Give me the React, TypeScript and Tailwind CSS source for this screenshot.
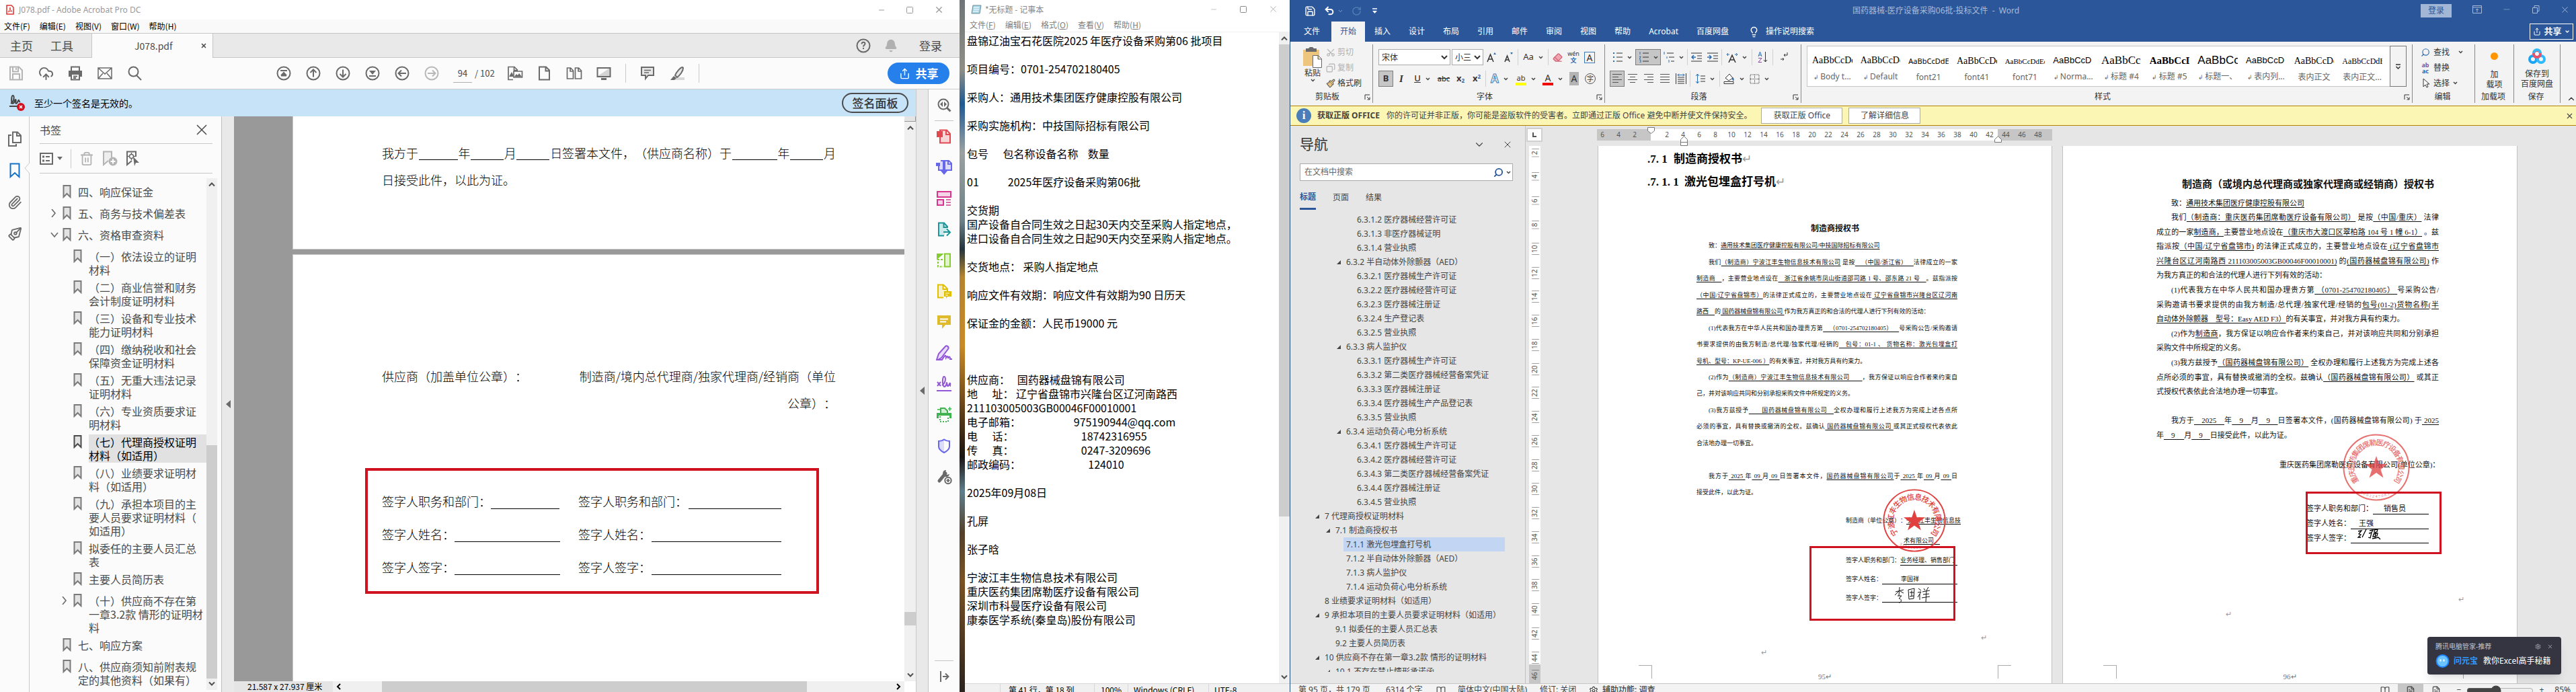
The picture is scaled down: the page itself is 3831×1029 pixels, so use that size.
import type { ReactNode } from "react";
import {
  Bell,
  BookOpen,
  ChevronDown,
  ChevronUp,
  CloudUpload,
  Copy,
  Eraser,
  FileText,
  Lightbulb,
  Minus,
  Paintbrush,
  Paperclip,
  PenTool,
  RotateCw,
  Save,
  Scissors,
  Search,
  Settings,
  Share,
  Square,
  Trash2,
  Undo2,
  X,
} from "lucide-react";

const uiFont = "font-['Noto_Sans','Noto_Sans_CJK_SC',sans-serif]";
const cjkFont = "font-['Noto_Sans_CJK_SC',sans-serif]";
const docFont = "font-['Liberation_Serif','Noto_Sans_CJK_SC',serif]";

interface DrawProps {
  w?: number;
  h?: number;
  className?: string;
  children: ReactNode;
}

function Draw({ w = 22, h = 22, className = "", children }: DrawProps) {
  return (
    <svg
      width={w}
      height={h}
      viewBox={`0 0 ${w} ${h}`}
      fill="none"
      stroke="currentColor"
      strokeWidth="2"
      className={`shrink-0 ${className}`}
    >
      {children}
    </svg>
  );
}

/* ------------------------------------------------------------------ */
/* Acrobat                                                             */
/* ------------------------------------------------------------------ */

interface Bookmark {
  text: string;
  level: 0 | 1;
  arrow?: "open" | "closed";
  selected?: boolean;
}

const bookmarks: Bookmark[] = [
  { text: "四、响应保证金", level: 0 },
  { text: "五、商务与技术偏差表", level: 0, arrow: "closed" },
  { text: "六、资格审查资料", level: 0, arrow: "open" },
  { text: "（一）依法设立的证明\n材料", level: 1 },
  { text: "（二）商业信誉和财务\n会计制度证明材料", level: 1 },
  { text: "（三）设备和专业技术\n能力证明材料", level: 1 },
  { text: "（四）缴纳税收和社会\n保障资金证明材料", level: 1 },
  { text: "（五）无重大违法记录\n证明材料", level: 1 },
  { text: "（六）专业资质要求证\n明材料", level: 1 },
  { text: "（七）代理商授权证明\n材料（如适用）", level: 1, selected: true },
  { text: "（八）业绩要求证明材\n料（如适用）", level: 1 },
  { text: "（九）承担本项目的主\n要人员要求证明材料（\n如适用）", level: 1 },
  { text: "拟委任的主要人员汇总\n表", level: 1 },
  { text: "主要人员简历表", level: 1 },
  { text: "（十）供应商不存在第\n一章3.2款 情形的证明材\n料", level: 1, arrow: "closed" },
  { text: "七、响应方案", level: 0 },
  { text: "八、供应商须知前附表规\n定的其他资料（如果有）", level: 0 },
];

function BookmarkGlyph({ dark }: { dark?: boolean }) {
  return (
    <Draw w={13} h={20} className={dark ? "text-[#4b4b4b]" : "text-[#7a7a7a]"}>
      <path d="M1.5 1h10v17l-5-5-5 5z" fill="#e2e2e2" />
    </Draw>
  );
}

function IconCell({ label, children }: { label: string; children: ReactNode }) {
  return (
    <button aria-label={label} className="flex h-11 w-11 shrink-0 items-center justify-center">
      {children}
    </button>
  );
}

function CircleIcon({ d, fill }: { d: string; fill?: string }) {
  return (
    <Draw>
      <circle cx="11" cy="11" r="9.5" />
      <path d={d} />
      {fill && <path d={fill} fill="currentColor" stroke="none" />}
    </Draw>
  );
}

function AcrobatToolbar() {
  return (
    <div className="flex h-[47px] items-center border-b border-[#cacaca] bg-[#fbfbfb] pr-[15px] pl-[2px] text-[#6a6a6a]">
      <IconCell label="保存">
        <Draw className="text-[#b4b4b4]">
          <path d="M2 1.5h13l5 5v14H2z M6 1.5v7h8v-7 M6 20v-8h10v8 M11 3v3" />
        </Draw>
      </IconCell>
      <IconCell label="上传">
        <CloudUpload size={23} />
      </IconCell>
      <IconCell label="打印">
        <Draw>
          <path d="M5 7V1.5h12V7" />
          <path d="M1 7h20v9h-3v-3H4v3H1z" fill="currentColor" stroke="none" />
          <path d="M5 13v7.5h12V13 M8 15.5h6 M8 18h4" />
        </Draw>
      </IconCell>
      <IconCell label="邮件">
        <Draw>
          <path d="M1 3h20v16H1z M1 3l10 9 10-9 M1 19l7-8 M21 19l-7-8" strokeWidth="1.5" />
        </Draw>
      </IconCell>
      <IconCell label="查找">
        <Draw>
          <circle cx="9.5" cy="8.5" r="7" />
          <path d="M14 14l7 7" />
        </Draw>
      </IconCell>
      <div className="w-[178px] shrink-0" />
      <IconCell label="第一页">
        <CircleIcon d="M6 7h10" fill="M11 8.5l5 5.5H6z M7 14h8v1.5H7z" />
      </IconCell>
      <IconCell label="上一页">
        <CircleIcon d="M11 16.5V6 M6.5 10L11 5.5l4.500 4.5" />
      </IconCell>
      <IconCell label="下一页">
        <CircleIcon d="M11 5.5V16 M6.5 12l4.500 4.500 4.500-4.500" />
      </IconCell>
      <IconCell label="最后一页">
        <CircleIcon d="M6 15h10" fill="M6 7h10l-5 6z" />
      </IconCell>
      <IconCell label="上一视图">
        <CircleIcon d="M17 11H6 M10 6.5L5.5 11l4.500 4.500" />
      </IconCell>
      <div className="text-[#b8b8b8]">
        <IconCell label="下一视图">
          <CircleIcon d="M5 11h11 M12 6.5l4.500 4.500-4.500 4.500" />
        </IconCell>
      </div>
      <div className="flex items-center pr-2 pl-[10px] text-[13px] text-[#4b4b4b]">
        <input
          aria-label="页码"
          defaultValue="94"
          className="h-7 w-7 border-b border-[#b0b0b0] text-center outline-none"
        />
        <span className="pl-1 whitespace-nowrap">/ 102</span>
      </div>
      <IconCell label="缩略图">
        <Draw w={24}>
          <path d="M9 20.5H2v-19h9l5 5 M10.5 1.5v5H16 M10 8h12.5v9H10z" strokeWidth="1.7" />
          <path d="M11 16l3-4 2 2 2-3 4 5z M3 16l4-7 2 4v3z" fill="currentColor" stroke="none" />
        </Draw>
      </IconCell>
      <IconCell label="单页">
        <Draw>
          <path d="M3 1.5h10l5 5v14H3z M12.5 1.5v6h6" />
        </Draw>
      </IconCell>
      <IconCell label="双页">
        <Draw w={24}>
          <path d="M1.5 3h5l4 4v12h-9z M6 3v5h4.5 M13.5 3h5l4 4v12h-9z M18 3v5h4.5" strokeWidth="1.7" />
        </Draw>
      </IconCell>
      <IconCell label="阅读模式">
        <Draw>
          <path d="M2 15L20 3v13H2z" fill="#d4d4d4" stroke="none" />
          <path d="M1.5 3h19v13h-19z" />
          <path d="M7 19.5h8" strokeWidth="3" />
        </Draw>
      </IconCell>
      <div className="mx-[10px] h-7 w-px bg-[#cacaca]" />
      <IconCell label="注释">
        <Draw>
          <path d="M2 2h18v12h-8l-4 5v-5H2z" fill="#e6e6e6" />
          <path d="M6 6.5h10 M6 10h7" strokeWidth="1.5" />
        </Draw>
      </IconCell>
      <IconCell label="高亮">
        <Draw w={24}>
          <path d="M10 17h13v4H8z" fill="#d8d8d8" stroke="none" />
          <path d="M20 2c-3 0-9 7-11 12l3 3c4-3 9-9 9-14z" fill="#e6e6e6" />
          <path d="M7 15l4 3-3 3H2z" fill="currentColor" stroke="none" />
        </Draw>
      </IconCell>
      <div className="mx-[10px] h-7 w-px bg-[#cacaca]" />
      <button className="ml-auto flex h-8 w-[92px] shrink-0 items-center justify-center gap-2 rounded-full bg-[#2680eb] text-[17px] font-bold text-white">
        <Share size={17} />
        共享
      </button>
    </div>
  );
}

function BookmarkPanel() {
  return (
    <aside className="flex w-[286px] shrink-0 flex-col border-r border-[#c0c0c0] bg-[#fbfbfb] pl-[15px] text-[#4b4b4b]">
      <div className="mr-[13px] flex h-[41px] items-center justify-between border-b border-[#c8c8c8] pr-2 text-[16px]">
        <h2>书签</h2>
        <button aria-label="关闭">
          <Draw w={16} h={16}>
            <path d="M1 1l14 14 M15 1L1 15" strokeWidth="1.5" />
          </Draw>
        </button>
      </div>
      <div className="mr-[13px] flex h-[44px] items-center gap-3 border-b border-[#c8c8c8]">
        <button aria-label="选项" className="flex items-center gap-[6px] text-[#6a6a6a]">
          <Draw w={20} h={18}>
            <path d="M1 1h18v16H1z M9 6h6 M9 12h6" />
            <path d="M4 4.5h3v3H4z M4 10.5h3v3H4z" fill="currentColor" stroke="none" />
          </Draw>
          <Draw w={8} h={5}>
            <path d="M0 0h8l-4 5z" fill="currentColor" stroke="none" />
          </Draw>
        </button>
        <div className="h-7 w-px bg-[#cacaca]" />
        <Trash2 size={22} className="text-[#b4b4b4]" />
        <Draw w={23} h={23} className="text-[#b4b4b4]">
          <path d="M9 15l-7 6V1.5h12V10" fill="#eeeeee" />
          <circle cx="16" cy="16" r="6.5" fill="currentColor" stroke="none" />
          <path d="M16 12.5v7 M12.5 16h7" stroke="#fff" />
        </Draw>
        <Draw w={21} h={23} className="text-[#6a6a6a]">
          <path d="M9 15l-7 6V1.5h13V9" />
          <circle cx="8.5" cy="8.5" r="3" strokeWidth="1.5" />
          <path d="M8.5 3v3 M8.5 11v3 M3 8.5h3 M11 8.5h3" strokeWidth="1.5" />
          <path d="M11 9l9 9h-5l-2 5z" fill="currentColor" stroke="none" />
        </Draw>
      </div>
      <div className="flex min-h-0 flex-1 pt-[7px] pb-[3px]">
        <ul className="w-[248px] shrink-0 overflow-hidden pt-1 text-[16px] leading-5">
          {bookmarks.map((item) => (
            <li
              key={item.text}
              className={`flex min-h-8 items-start pt-[6px] ${item.level === 0 ? "pl-4" : "pl-8"}`}
            >
              <span className="flex h-5 w-[18px] shrink-0 items-center text-[#6a6a6a]">
                {item.arrow === "open" && (
                  <Draw w={12} h={12}>
                    <path d="M1 3l5 6 5-6" strokeWidth="1.6" />
                  </Draw>
                )}
                {item.arrow === "closed" && (
                  <Draw w={12} h={12}>
                    <path d="M2 0l5 6-5 6" strokeWidth="1.6" />
                  </Draw>
                )}
              </span>
              <span className="flex w-[23px] shrink-0">
                <BookmarkGlyph dark={item.selected} />
              </span>
              <a
                href="#"
                className={`-my-px whitespace-pre py-px ${item.selected ? "flex-1 bg-[#e1e1e1] text-black" : ""}`}
              >
                {item.text}
              </a>
            </li>
          ))}
        </ul>
        <ScrollBar thumb="top-[397px] bottom-[17px]" />
      </div>
    </aside>
  );
}

function ScrollBar({ thumb, className = "w-4" }: { thumb: string; className?: string }) {
  return (
    <div
      className={`relative flex shrink-0 flex-col items-center justify-between bg-[#f0f0f0] py-[5px] text-[#505050] ${className}`}
    >
      <Draw w={10} h={8}>
        <path d="M1 6.5l4-4 4 4" />
      </Draw>
      <div className={`absolute inset-x-0 bg-[#cdcdcd] ${thumb}`} />
      <Draw w={10} h={8}>
        <path d="M1 1.5l4 4 4-4" />
      </Draw>
    </div>
  );
}

function Blank({ className }: { className: string }) {
  return <span className={`h-[22px] shrink-0 border-b border-black ${className}`} />;
}

function SignField({ label, lines }: { label: string; lines: [string, string] }) {
  return (
    <div className="flex h-[49px] items-center">
      <div className="flex w-[264px] items-center justify-between">
        <span>{label}</span>
        <Blank className={lines[0]} />
      </div>
      <div className="ml-7 flex w-[302px] items-center justify-between">
        <span>{label}</span>
        <Blank className={lines[1]} />
      </div>
    </div>
  );
}

function PdfPages() {
  return (
    <div className="flex min-w-0 flex-1 flex-col bg-white">
      <div className="flex min-h-0 flex-1">
        <div className="flex min-w-0 flex-1 flex-col bg-[#999999] pl-[87px] text-[18px] font-light whitespace-nowrap text-black">
          <div className="h-[198px] border-b border-l border-[#c8c8c8] bg-white pt-[34px] pl-[132px]">
            <div className="flex h-10 w-[675px] items-center justify-between">
              <span>我方于</span>
              <Blank className="w-[58px]" />
              <span>年</span>
              <Blank className="w-[49px]" />
              <span>月</span>
              <Blank className="w-[49px]" />
              <span>日签署本文件，（供应商名称）于</span>
              <Blank className="w-[67px]" />
              <span>年</span>
              <Blank className="w-[49px]" />
              <span>月</span>
            </div>
            <div className="flex h-10 items-center">日接受此件，以此为证。</div>
          </div>
          <div className="mt-[7px] flex-1 overflow-hidden border-t border-l border-[#c8c8c8] bg-white pt-[160px] pl-[107px]">
            <div className="w-[700px] pl-[25px]">
              <div className="flex h-10 items-center justify-between">
                <span>供应商（加盖单位公章）：</span>
                <span>制造商/境内总代理商/独家代理商/经销商（单位</span>
              </div>
              <div className="flex h-10 items-center justify-end">公章）：</div>
            </div>
            <div className="mt-[77px] h-[187px] w-[675px] border-4 border-[#d0111f] pt-[21px] pl-[21px]">
              <SignField label="签字人职务和部门：" lines={["w-[102px]", "w-[138px]"]} />
              <SignField label="签字人姓名：" lines={["w-[157px]", "w-[193px]"]} />
              <SignField label="签字人签字：" lines={["w-[157px]", "w-[193px]"]} />
            </div>
          </div>
        </div>
        <div className="flex w-[17px] shrink-0 flex-col">
          <div className="h-2 border-r border-b border-[#999] bg-[#e4e4e4]" />
          <ScrollBar thumb="top-[729px] h-5" className="w-full flex-1" />
        </div>
      </div>
      <div className="flex h-4 shrink-0 bg-[#f0f0f0] text-[12px] leading-4 text-black">
        <div className="w-[147px] bg-[#e5e5e5] pl-5 whitespace-nowrap">21.587 x 27.937 厘米</div>
        <div className="flex flex-1 items-center px-1">
          <Draw w={10} h={12}>
            <path d="M7 2L3 6l4 4" />
          </Draw>
          <div className="ml-[59px] h-full flex-1 bg-[#cdcdcd]" />
          <Draw w={10} h={12} className="ml-[131px]">
            <path d="M3 2l4 4-4 4" />
          </Draw>
        </div>
        <div className="w-[17px] bg-white" />
      </div>
    </div>
  );
}

function ToolRail() {
  return (
    <div className="flex w-[47px] shrink-0 flex-col items-center border-l border-[#c4c4c4] bg-[#fbfbfb] text-[#6a6a6a] [&>button]:flex [&>button]:h-[46px] [&>button]:shrink-0 [&>button]:items-center">
      <button aria-label="搜索工具">
        <Draw>
          <circle cx="10" cy="10" r="7.5" />
          <path d="M15.5 15.5l5 5" strokeWidth="3" />
          <path d="M9 6v8l-4-4z M11 6v8l4-4z" fill="currentColor" stroke="none" />
        </Draw>
      </button>
      <div className="h-px w-7 shrink-0 bg-[#c4c4c4]" />
      <button aria-label="创建 PDF" className="text-[#e34850]">
        <Draw>
          <path d="M5 11v9.5h15V7l-5-5.500H5V4 M14 1.5V8h6" fill="#f6d5d7" />
          <path d="M1 4h7v7H1z" fill="currentColor" />
        </Draw>
      </button>
      <button aria-label="合并文件" className="text-[#6767ec]">
        <Draw w={24} h={24}>
          <path d="M4 7v9h7V2H7 M13 2h6l4 4v10H13z M18 2v5h5" fill="#dcdcfa" />
          <path d="M0 5h6v5H0z M7 17h10l-5 6z M11 12h2v6h-2z" fill="currentColor" stroke="none" />
        </Draw>
      </button>
      <button aria-label="组织页面" className="text-[#d83790]">
        <Draw>
          <path d="M1 1h20v8H1z M1 13h9v8H1z" fill="#f6d3e6" />
          <path d="M14 13h7 M14 17h7 M14 21h7" strokeWidth="1.5" />
        </Draw>
      </button>
      <button aria-label="导出 PDF" className="text-[#1b959a]">
        <Draw>
          <path d="M16 9V7l-5-5.500H3v19h8 M10.5 1.5V8H16" fill="#cde9ea" />
          <path d="M10 15h9 M15 10.5l5 5-5 5" />
        </Draw>
      </button>
      <button aria-label="编辑页面" className="text-[#85cb33]">
        <Draw>
          <path d="M12 1.5h8v19h-8z" fill="#e2f3cd" />
          <path d="M9 10H2v10.500h8" strokeDasharray="3 2" />
          <path d="M1 2h7L1 8z" fill="currentColor" />
        </Draw>
      </button>
      <button aria-label="发送注释" className="text-[#dfbf00]">
        <Draw>
          <path d="M10 20.5H2v-19h8l6 6v4 M9.5 1.5V8H16" fill="#f8f1c8" />
          <path d="M11 11h11v8h-6l-2 3v-3h-3z" fill="currentColor" stroke="none" />
          <path d="M13 14h6 M13 17h4" stroke="#fff" strokeWidth="1.2" />
        </Draw>
      </button>
      <button aria-label="注释" className="text-[#dfbb2b]">
        <Draw>
          <path d="M1 1h20v14h-8l-5 6v-6H1z" fill="currentColor" stroke="none" />
          <path d="M5 6.5h12 M5 10.5h9" stroke="#fff" />
        </Draw>
      </button>
      <button aria-label="填写和签名" className="text-[#9256d9]">
        <Draw w={24} h={24}>
          <path d="M1 22l3-9L14 2c2-2 6 1 4 4L8 19l-5 3z" fill="#e8dcf8" />
          <path d="M2 22h7c4-7 6-8 6-3 2-3 3-3 3 1 1-3 3-4 3 1h3" />
        </Draw>
      </button>
      <button aria-label="请求签名" className="text-[#9256d9]">
        <Draw w={22} h={24}>
          <path d="M1 9l5 6 M6 9l-5 6 M8 14C14 10 14 1 11 1S8 17 12 16c4-2 2-6 3-6s0 6 2 5 2-5 3-4-1 4 1 4 M0 22h22" />
        </Draw>
      </button>
      <button aria-label="扫描和 OCR" className="text-[#3fb34f]">
        <Draw w={22} h={24}>
          <path d="M6 10V2h6l4 4v4" fill="#cfeed3" />
          <path d="M0 9h22v8h-3v-4H3v4H0z" fill="currentColor" stroke="none" />
          <path d="M5 14v8h12v-8" strokeDasharray="2 2" />
          <path d="M1 4h4 M17 3h5 M19.5 0v6" strokeWidth="1.3" />
        </Draw>
      </button>
      <button aria-label="保护" className="text-[#6767ec]">
        <Draw>
          <path d="M11 1.5V21c-6-3-8-6-8-9V4c3 0 6-1 8-2.500z" fill="#dcdcfa" stroke="none" />
          <path d="M11 1.5c2 1.500 5 2.500 8 2.500v8c0 3-2 6-8 9-6-3-8-6-8-9V4c3 0 6-1 8-2.500z" />
        </Draw>
      </button>
      <button aria-label="更多工具">
        <Draw w={23} h={23}>
          <path d="M4 17L13 6" strokeWidth="5" strokeLinecap="round" />
          <path d="M14 1a5 5 0 1 0 5 6l-4 1-2-3z" fill="currentColor" stroke="none" />
          <circle cx="17" cy="16.5" r="4.7" fill="#fbfbfb" />
          <path d="M17 14v5 M14.5 16.5h5" />
        </Draw>
      </button>
      <div className="mt-auto h-px w-7 shrink-0 bg-[#c4c4c4]" />
      <button aria-label="折叠">
        <Draw w={16} h={16}>
          <path d="M3 0v16 M6 8h8 M10 3.5L14.5 8 10 12.5" />
        </Draw>
      </button>
    </div>
  );
}

function AcrobatWindow() {
  return (
    <section className={`flex min-h-0 min-w-0 flex-col overflow-hidden bg-[#e9e9e9] ${cjkFont}`}>
      <header className="flex h-[29px] shrink-0 items-center bg-white pl-[9px] text-[12px] text-[#999]">
        <Draw w={12} h={15} className="text-[#e0312b]">
          <path d="M1 1h7l3 3v10H1z" strokeWidth="1.5" />
          <path d="M3 11c2-2 3-5 3-7 0 3 1 5 3 6-2-1-4 0-6 1z" strokeWidth="1" />
        </Draw>
        <h1 className="flex-1 pl-[7px] font-['Noto_Sans']">J078.pdf - Adobe Acrobat Pro DC</h1>
        <div className="flex w-[140px] items-center justify-between pr-[23px] pl-[18px]">
          <Minus size={12} strokeWidth={2} />
          <Square size={12} strokeWidth={2} />
          <X size={15} strokeWidth={2} />
        </div>
      </header>
      <nav className="flex h-5 shrink-0 items-center gap-[14px] bg-[#f9f9f9] pl-[6px] text-[12px] text-black">
        {["文件(F)", "编辑(E)", "视图(V)", "窗口(W)", "帮助(H)"].map((item) => (
          <button key={item}>{item}</button>
        ))}
      </nav>
      <div className="flex h-[37px] shrink-0 border-t border-b border-[#c6c6c6] text-[17px] text-[#4b4b4b]">
        <button className="pl-[15px]">主页</button>
        <button className="w-[88px] border-r border-[#c6c6c6] pl-[26px] text-left">工具</button>
        <div className="-mb-px flex w-[180px] items-center justify-center border-r border-[#c6c6c6] bg-[#fbfbfb] pl-8 text-[14px]">
          <span className="flex-1 pl-[31px]">J078.pdf</span>
          <button aria-label="关闭标签" className="pr-2">
            <X size={10} strokeWidth={4} />
          </button>
        </div>
        <div className="ml-auto flex items-center pr-[26px]">
          <Draw className="text-[#6a6a6a]">
            <circle cx="11" cy="11" r="9.5" />
            <path d="M8.5 8.5c0-4 5-3.500 5-.5 0 2-2.500 2-2.500 4.500 M11 14v2" />
          </Draw>
          <Bell size={20} fill="#b0b0b0" className="ml-5 text-[#b0b0b0]" />
          <button className="ml-8">登录</button>
        </div>
      </div>
      <AcrobatToolbar />
      <div className="flex min-h-0 flex-1">
        <div className="flex min-w-0 flex-1 flex-col">
          <div className="flex h-10 shrink-0 items-center bg-[#c7e3f8] pr-[11px] pl-[13px] text-[14px] text-black">
            <Draw w={26} h={26} className="text-[#444]">
              <path d="M3 14c5-3 6-12 3-12-2 0-3 12 0 12 4-1 2-6 4-6s-1 6 1 6 3-6 4-5 0 3 2 2 M1 18h13" />
              <circle cx="18" cy="19" r="6" fill="#d7101f" stroke="none" />
              <path d="M16 17l4 4 M20 17l-4 4" stroke="#fff" strokeWidth="1.5" />
            </Draw>
            <span className="flex-1 pl-3">至少一个签名是无效的。</span>
            <button className="h-[30px] w-[99px] rounded-full border-2 border-[#4b4b4b] text-[17px] leading-6 font-medium text-[#333]">
              签名面板
            </button>
          </div>
          <div className="flex min-h-0 flex-1">
            <div className="relative flex w-11 shrink-0 flex-col items-center border-r border-[#c8c8c8] bg-[#fbfbfb] pt-[10px] text-[#6a6a6a] [&>button]:flex [&>button]:h-[47px] [&>button]:items-center">
              <button aria-label="页面缩略图">
                <Draw w={20} h={24}>
                  <path d="M7 1.5h7l5 5V17H7z M13 1.5V7h6 M5 6H1v16h11v-3" />
                </Draw>
              </button>
              <button aria-label="书签" className="text-[#1473c8]">
                <Draw w={16} h={23}>
                  <path d="M1.5 1.5h13V21L8 15l-6.500 6z" />
                </Draw>
              </button>
              <button aria-label="附件">
                <Paperclip size={22} />
              </button>
              <button aria-label="签名">
                <PenTool size={22} className="-scale-x-100" />
              </button>
              <Draw w={8} h={16} className="absolute top-[69px] right-[-1px] text-[#c8c8c8]">
                <path d="M8 0L1 8l7 8" fill="#fbfbfb" strokeWidth="1" />
              </Draw>
            </div>
            <BookmarkPanel />
            <div className="flex w-[18px] shrink-0 items-center justify-center">
              <Draw w={7} h={12} className="text-[#6a6a6a]">
                <path d="M7 0v12L0 6z" fill="currentColor" stroke="none" />
              </Draw>
            </div>
            <PdfPages />
          </div>
        </div>
        <div className="flex w-[18px] shrink-0 items-center justify-center border-l border-[#c8c8c8]">
          <Draw w={7} h={12} className="text-[#6a6a6a]">
            <path d="M7 0v12L0 6z" fill="currentColor" stroke="none" />
          </Draw>
        </div>
        <ToolRail />
      </div>
    </section>
  );
}

/* ------------------------------------------------------------------ */
/* Notepad                                                             */
/* ------------------------------------------------------------------ */

const noteText = [
  "盘锦辽油宝石花医院2025 年医疗设备采购第06 批项目",
  "",
  "项目编号：0701-254702180405",
  "",
  "采购人：通用技术集团医疗健康控股有限公司",
  "",
  "采购实施机构：中技国际招标有限公司",
  "",
  "包号      包名称设备名称    数量",
  "",
  "01            2025年医疗设备采购第06批",
  "",
  "交货期",
  "国产设备自合同生效之日起30天内交至采购人指定地点，",
  "进口设备自合同生效之日起90天内交至采购人指定地点。",
  "",
  "交货地点： 采购人指定地点",
  "",
  "响应文件有效期：响应文件有效期为90 日历天",
  "",
  "保证金的金额：人民币19000 元",
  "",
  "",
  "",
  "供应商：   国药器械盘锦有限公司",
  "地      址： 辽宁省盘锦市兴隆台区辽河南路西",
  "211103005003GB00046F00010001",
  "电子邮箱：                      975190944@qq.com",
  "电      话：                            18742316955",
  "传      真：                            0247-3209696",
  "邮政编码：                            124010",
  "",
  "2025年09月08日",
  "",
  "孔屏",
  "",
  "张子晗",
  "",
  "宁波江丰生物信息技术有限公司",
  "重庆医药集团席勒医疗设备有限公司",
  "深圳市科曼医疗设备有限公司",
  "康泰医学系统(秦皇岛)股份有限公司",
].join("\n");

const noteMenus = [
  ["文件", "F"],
  ["编辑", "E"],
  ["格式", "O"],
  ["查看", "V"],
  ["帮助", "H"],
];

function NotepadWindow() {
  return (
    <section className={`flex min-h-0 min-w-0 flex-col overflow-hidden bg-white ${cjkFont}`}>
      <header className="flex h-[27px] shrink-0 items-center pr-[17px] pl-[9px] text-[12px] text-[#8a8a8a]">
        <Draw w={16} h={16}>
          <path d="M3 2h12l-2 12H1z" fill="#a9d7e8" stroke="#6b8b99" strokeWidth="1" />
          <path d="M4 5h8 M4 8h8 M3 11h8" stroke="#fff" strokeWidth="1" />
        </Draw>
        <h1 className="flex-1 pl-[5px]">*无标题 - 记事本</h1>
        <div className="flex w-[102px] items-center justify-between">
          <Minus size={12} strokeWidth={1} />
          <Square size={12} strokeWidth={2} />
          <X size={15} strokeWidth={1} />
        </div>
      </header>
      <nav className="flex h-[21px] shrink-0 items-center gap-[14px] border-b border-[#f0f0f0] pl-[7px] text-[12px] text-[#808080]">
        {noteMenus.map(([name, key]) => (
          <button key={key}>
            {name}(<u>{key}</u>)
          </button>
        ))}
      </nav>
      <div className="flex min-h-0 flex-1">
        <textarea
          aria-label="文本"
          defaultValue={noteText}
          spellCheck={false}
          className="min-w-0 flex-1 resize-none overflow-hidden pt-[2px] pl-[3px] text-[16px] leading-[21px] text-black outline-none"
        />
        <ScrollBar thumb="top-[18px] h-[702px]" />
      </div>
      <footer className="flex h-[13px] shrink-0 overflow-hidden border-t border-[#d7d7d7] bg-[#f0f0f0] text-[12px] leading-[18px] text-black [&>span]:border-l [&>span]:border-[#d7d7d7] [&>span]:whitespace-nowrap">
        <span className="ml-[52px] w-[140px] pl-3">第 41 行，第 18 列</span>
        <span className="w-[50px] pl-[9px]">100%</span>
        <span className="w-[120px] pl-2">Windows (CRLF)</span>
        <span className="pl-2">UTF-8</span>
      </footer>
    </section>
  );
}

/* ------------------------------------------------------------------ */
/* Word                                                                */
/* ------------------------------------------------------------------ */

const ribbonTabs = ["插入", "设计", "布局", "引用", "邮件", "审阅", "视图", "帮助", "Acrobat", "百度网盘"];

const styleItems = [
  { sample: "AaBbCcDd", name: "Body t...", mark: true, cls: "font-['Liberation_Serif'] text-[14px]" },
  { sample: "AaBbCcDd", name: "Default", mark: true, cls: "font-['Liberation_Serif'] text-[14px]" },
  { sample: "AaBbCcDdE", name: "font21", mark: false, cls: "font-['Noto_Sans'] text-[11px]" },
  { sample: "AaBbCcDd", name: "font41", mark: false, cls: "font-['Liberation_Serif'] text-[14px]" },
  { sample: "AaBbCcDdEe", name: "font71", mark: false, cls: "font-['Liberation_Serif'] text-[11px]" },
  { sample: "AaBbCcD", name: "Norma...", mark: true, cls: "font-['Liberation_Sans'] text-[13px]" },
  { sample: "AaBbCc", name: "标题 #4", mark: true, cls: "font-['Liberation_Serif'] text-[17px]" },
  { sample: "AaBbCcD", name: "标题 #5", mark: true, cls: "font-['Liberation_Serif'] text-[15px] font-bold" },
  { sample: "AaBbCc", name: "标题一、", mark: true, cls: "font-['Liberation_Sans'] text-[17px]" },
  { sample: "AaBbCcD", name: "表内列...", mark: true, cls: "font-['Liberation_Sans'] text-[13px]" },
  { sample: "AaBbCcDd", name: "表内正文", mark: false, cls: "font-['Liberation_Serif'] text-[14px]" },
  { sample: "AaBbCcDdE", name: "表内正文...", mark: false, cls: "font-['Liberation_Serif'] text-[12px]" },
];

function Caret() {
  return (
    <Draw w={7} h={5} className="text-[#444]">
      <path d="M1 1l2.500 2.500L6 1" strokeWidth="1.5" />
    </Draw>
  );
}

function Tool({ label, w, on, children }: { label: string; w: string; on?: boolean; children: ReactNode }) {
  return (
    <button
      aria-label={label}
      className={`flex h-6 shrink-0 items-center justify-center gap-[7px] ${w} ${
        on ? "border border-[#7c7c7c] bg-[#c6c6c6]" : ""
      }`}
    >
      {children}
    </button>
  );
}

function ThinRule() {
  return <div className="mx-px h-6 w-px shrink-0 bg-[#d2d0ce]" />;
}

function Lines({ d }: { d: string }) {
  return (
    <Draw w={16} h={16} className="text-[#555]">
      <path d={d} strokeWidth="1" />
    </Draw>
  );
}

function Launcher({ label }: { label: string }) {
  return (
    <button aria-label={`${label}设置`}>
      <Draw w={9} h={9}>
        <path d="M1 8V1h7 M4 4l4 4 M8 4.5V8H4.5" strokeWidth="1" />
      </Draw>
    </button>
  );
}

interface GroupProps {
  label: string;
  launcher?: boolean;
  className: string;
  children: ReactNode;
}

function Group({ label, launcher, className, children }: GroupProps) {
  return (
    <div className={`my-1 flex flex-col border-r border-[#8a8886] ${className}`}>
      <div className="min-h-0 flex-1">{children}</div>
      <div className="flex h-[18px] items-center pr-[3px]">
        <span className="flex-1 text-center">{label}</span>
        {launcher && <Launcher label={label} />}
      </div>
    </div>
  );
}

function Ribbon() {
  return (
    <div className="flex h-[95px] shrink-0 bg-[#f3f3f3] text-[12px] text-[#333]">
      <Group label="剪贴板" launcher className="w-[123px] shrink-0">
        <div className="flex h-full pl-[13px]">
          <button className="flex w-10 flex-col items-center pt-1 leading-4">
            <Draw w={28} h={31}>
              <path d="M0 4h24v24H0z" fill="#eec57c" stroke="none" />
              <path d="M4 2h4l2-2h4l2 2h4v5H4z" fill="#6a6a6a" stroke="none" />
              <path d="M14.5 12.5h8l5 5v13h-13z M22 12.5V18h5.5" fill="#fff" stroke="#666" strokeWidth="1" />
            </Draw>
            <span>粘贴</span>
            <Caret />
          </button>
          <div className="flex flex-col [&>button]:flex [&>button]:h-[23px] [&>button]:items-center [&>button]:gap-[3px]">
            <button className="text-[#b1b1b1]">
              <Scissors size={14} className="-rotate-90" />
              剪切
            </button>
            <button className="text-[#b1b1b1]">
              <Copy size={14} className="-scale-x-100" />
              复制
            </button>
            <button>
              <Paintbrush size={14} fill="#eec57c" className="text-[#666]" />
              格式刷
            </button>
          </div>
        </div>
      </Group>
      <Group label="字体" launcher className="w-[345px] shrink-0">
        <div className="flex flex-col gap-2 pt-[7px] pl-2">
          <div className="flex items-center">
            <select aria-label="字体" className="h-6 w-[107px] border border-[#ababab] bg-white">
              <option>宋体</option>
            </select>
            <select aria-label="字号" className="ml-[2px] h-6 w-[47px] border border-[#ababab] bg-white">
              <option>小三</option>
            </select>
            <Tool label="增大字号" w="w-[25px]">
              <Draw w={15} h={16}>
                <path d="M1 15L5.500 4 10 15 M3 11h5" strokeWidth="1.5" />
                <path d="M10 4l2-3 2 3z" fill="#2b6cb0" stroke="none" />
              </Draw>
            </Tool>
            <Tool label="减小字号" w="w-[25px]">
              <Draw w={15} h={16}>
                <path d="M2 15l3.500-9L9 15 M3 12h5" strokeWidth="1.5" />
                <path d="M10 1h4l-2 3z" fill="#2b6cb0" stroke="none" />
              </Draw>
            </Tool>
            <ThinRule />
            <Tool label="更改大小写" w="w-[42px]">
              <span className="text-[13px]">Aa</span>
              <Caret />
            </Tool>
            <ThinRule />
            <Tool label="清除格式" w="w-6">
              <Eraser size={15} fill="#f2a5b0" className="text-[#cf6679]" />
            </Tool>
            <Tool label="拼音指南" w="w-6">
              <span className="flex flex-col items-center text-[9px] leading-[10px]">
                wén<b className="text-[#2b6cb0]">文</b>
              </span>
            </Tool>
            <Tool label="字符边框" w="w-6">
              <span className="w-4 border border-[#3b78b5] text-[14px] leading-[15px]">A</span>
            </Tool>
          </div>
          <div className="flex items-center">
            <Tool label="加粗" w="w-[22px]" on>
              <b className="text-[13px]">B</b>
            </Tool>
            <Tool label="倾斜" w="w-6">
              <i className="font-['Liberation_Serif'] text-[15px] font-bold">I</i>
            </Tool>
            <Tool label="下划线" w="w-[38px]">
              <u className="text-[13px] font-medium">U</u>
              <Caret />
            </Tool>
            <Tool label="删除线" w="w-[26px]">
              <s className="text-[11px] font-medium">abc</s>
            </Tool>
            <Tool label="下标" w="w-6">
              <b className="text-[13px]">
                x<sub className="text-[8px] text-[#2b6cb0]">2</sub>
              </b>
            </Tool>
            <Tool label="上标" w="w-6">
              <b className="text-[13px]">
                x<sup className="text-[8px] text-[#2b6cb0]">2</sup>
              </b>
            </Tool>
            <ThinRule />
            <Tool label="文本效果" w="w-[38px]">
              <span className="text-[17px] font-bold text-white [-webkit-text-stroke:1px_#3b78b5]">A</span>
              <Caret />
            </Tool>
            <Tool label="突出显示" w="w-10">
              <span className="w-4 border-b-4 border-[#ffff00] text-[11px] leading-[15px]">ab</span>
              <Caret />
            </Tool>
            <Tool label="字体颜色" w="w-10">
              <span className="w-4 border-b-4 border-[#f00000] text-[14px] leading-[15px]">A</span>
              <Caret />
            </Tool>
            <Tool label="字符底纹" w="w-6">
              <span className="w-[14px] bg-[#b4b4b4] text-[14px] leading-5">A</span>
            </Tool>
            <Tool label="带圈字符" w="w-6">
              <span className="h-4 w-4 rounded-full border border-[#555] text-[10px] leading-[14px]">字</span>
            </Tool>
          </div>
        </div>
      </Group>
      <Group label="段落" launcher className="w-[292px] shrink-0">
        <div className="flex flex-col gap-2 pt-[7px] pl-[7px]">
          <div className="flex items-center">
            <Tool label="项目符号" w="w-[38px]">
              <Draw w={14} h={16}>
                <path d="M5 2h9 M5 8h9 M5 14h9" strokeWidth="1" />
                <path d="M0 1h2v2H0z M0 7h2v2H0z M0 13h2v2H0z" fill="#2b6cb0" stroke="none" />
              </Draw>
              <Caret />
            </Tool>
            <Tool label="编号" w="w-[38px]" on>
              <Draw w={15} h={16}>
                <path d="M6 2h9 M6 8h9 M6 14h9" strokeWidth="1" />
                <path d="M2 0v4 M1 7h2v1l-2 2h2 M1 12h2v4H1" stroke="#2b6cb0" strokeWidth="1" />
              </Draw>
              <Caret />
            </Tool>
            <Tool label="多级列表" w="w-[38px]">
              <Draw w={16} h={16}>
                <path d="M5 2h10 M8 8h8 M11 14h5" strokeWidth="1" />
                <path d="M1 0v4 M5 7v3 M8 12v4" stroke="#2b6cb0" strokeWidth="1" />
              </Draw>
              <Caret />
            </Tool>
            <ThinRule />
            <Tool label="减少缩进" w="w-6">
              <Draw w={16} h={14}>
                <path d="M0 1h16 M9 5h7 M9 9h7 M0 13h16" strokeWidth="1" />
                <path d="M7 7H1 M4 4L1 7l3 3" stroke="#2b6cb0" strokeWidth="1.5" />
              </Draw>
            </Tool>
            <Tool label="增加缩进" w="w-6">
              <Draw w={16} h={14}>
                <path d="M0 1h16 M9 5h7 M9 9h7 M0 13h16" strokeWidth="1" />
                <path d="M0 7h6 M3 4l3 3-3 3" stroke="#2b6cb0" strokeWidth="1.5" />
              </Draw>
            </Tool>
            <ThinRule />
            <Tool label="中文版式" w="w-[42px]">
              <Draw w={16} h={15}>
                <path d="M3 15l5-11 5 11 M5 11h6" strokeWidth="1.5" />
                <path d="M4 3H0 M2 1L0 3l2 2 M12 3h4 M14 1l2 2-2 2" stroke="#2b6cb0" strokeWidth="1" />
              </Draw>
              <Caret />
            </Tool>
            <ThinRule />
            <Tool label="排序" w="w-7">
              <Draw w={15} h={18}>
                <path d="M1 8l2.500-7L6 8 M2 6h3" stroke="#2b6cb0" strokeWidth="1" />
                <path d="M1 10.5h5l-5 6h5" stroke="#8e44ad" strokeWidth="1" />
                <path d="M11.5 1v15 M9 13l2.500 3 2.500-3" strokeWidth="1" />
              </Draw>
            </Tool>
            <ThinRule />
            <Tool label="显示标记" w="w-[30px]">
              <Draw w={11} h={14}>
                <path d="M10 0v4H5 M7 2L5 4l2 2 M0 10h5 M3 8l2 2-2 2" strokeWidth="1" />
              </Draw>
            </Tool>
          </div>
          <div className="flex items-center">
            <Tool label="左对齐" w="w-[22px]" on>
              <Lines d="M1 1.5h14 M1 5.5h9 M1 9.500h14 M1 13.500h9" />
            </Tool>
            <Tool label="居中" w="w-6">
              <Lines d="M1 1.5h14 M4 5.5h8 M1 9.500h14 M4 13.500h8" />
            </Tool>
            <Tool label="右对齐" w="w-6">
              <Lines d="M1 1.5h14 M6 5.5h9 M1 9.500h14 M6 13.500h9" />
            </Tool>
            <Tool label="两端对齐" w="w-6">
              <Lines d="M1 1.5h14 M1 5.5h14 M1 9.500h14 M1 13.500h14" />
            </Tool>
            <Tool label="分散对齐" w="w-6">
              <Draw w={16} h={16}>
                <path d="M.5 0v16 M15.5 0v16 M3 6h10 M3 9h10 M3 12h10 M3 15h10" strokeWidth="1" />
                <path d="M3 2.5h10 M5 .5l-2 2 2 2 M11 .5l2 2-2 2" stroke="#2b6cb0" strokeWidth="1" />
              </Draw>
            </Tool>
            <ThinRule />
            <Tool label="行距" w="w-[41px]">
              <Draw w={14} h={16}>
                <path d="M7 4h7 M7 8h7 M7 12h7" strokeWidth="1" />
                <path d="M2.5 1v14 M0 4l2.500-3L5 4 M0 12l2.500 3L5 12" stroke="#2b6cb0" strokeWidth="1" />
              </Draw>
              <Caret />
            </Tool>
            <ThinRule />
            <Tool label="底纹" w="w-[38px]">
              <Draw w={17} h={16}>
                <path d="M3 7l6-6 5 6-6 4z M1 12.5h14v3H1z" fill="#fff" strokeWidth="1" />
                <path d="M14 6c2 1 2 4 1 6l-2-3z" fill="#2b6cb0" stroke="none" />
              </Draw>
              <Caret />
            </Tool>
            <Tool label="边框" w="w-[38px]">
              <Draw w={15} h={15}>
                <path d="M1 1h13v13H1z M7.5 1v13 M1 7.5h13" strokeWidth="1" strokeDasharray="1 1" />
              </Draw>
              <Caret />
            </Tool>
          </div>
        </div>
      </Group>
      <Group label="样式" launcher className="min-w-0 flex-1">
        <div className="mx-2 mt-[2px] flex h-[61px] border border-[#c8c6c4] bg-white">
          <div className="grid min-w-0 flex-1 grid-cols-12 pl-[7px]">
            {styleItems.map((item) => (
              <button key={item.name} className="min-w-0 pt-2 pr-3 text-center text-[#666]">
                <span className={`block h-6 overflow-hidden text-left leading-6 whitespace-nowrap text-black ${item.cls}`}>
                  {item.sample}
                </span>
                <span className="block leading-6 whitespace-nowrap">
                  {item.mark && <span className="text-[9px]">↲ </span>}
                  {item.name}
                </span>
              </button>
            ))}
          </div>
          <button
            aria-label="更多样式"
            className="-m-px flex w-[25px] items-center justify-center border border-[#777] bg-[#f3f3f3]"
          >
            <Draw w={9} h={8}>
              <path d="M1 1h7 M1.5 4l3 3 3-3" strokeWidth="1.5" />
            </Draw>
          </button>
        </div>
      </Group>
      <Group label="编辑" className="w-[93px] shrink-0">
        <div className="flex flex-col pl-3 [&>button]:flex [&>button]:h-[23px] [&>button]:items-center [&>button]:gap-[5px]">
          <button>
            <Search size={14} className="-scale-x-100 text-[#2b6cb0]" />
            查找
            <span className="pl-2">
              <Caret />
            </span>
          </button>
          <button>
            <span className="w-[14px] text-[9px] leading-[9px] font-bold text-[#7a5aa6]">
              ab <span className="text-[#2b6cb0]">ac</span>
            </span>
            替换
          </button>
          <button>
            <Draw w={14} h={15}>
              <path d="M4 1v12l3-3 2 4 2-1-2-4h4z" fill="#fff" strokeWidth="1" />
            </Draw>
            选择
            <Caret />
          </button>
        </div>
      </Group>
      <Group label="加载项" className="w-[58px] shrink-0">
        <button className="flex h-full w-full flex-col items-center pt-3 leading-[15px]">
          <span className="mb-[14px] h-[11px] w-[11px] rounded-full bg-[#ff9500]" />
          加<br />
          载项
        </button>
      </Group>
      <Group label="保存" className="w-[69px] shrink-0">
        <button className="flex h-full w-full flex-col items-center pt-[6px] leading-[15px]">
          <Draw w={27} h={25} className="mb-[5px]">
            <circle cx="7" cy="16" r="5" stroke="#19a5f5" strokeWidth="4" />
            <circle cx="19" cy="16" r="5" stroke="#2fb9ff" strokeWidth="4" />
            <circle cx="13" cy="8" r="5" stroke="#e8506a" strokeWidth="4" />
            <path d="M8 7a5 5 0 0 1 10 0" stroke="#35b8f4" strokeWidth="4" />
          </Draw>
          保存到
          <br />
          百度网盘
        </button>
      </Group>
      <button aria-label="折叠功能区" className="flex w-[23px] shrink-0 items-end justify-end pb-[3px]">
        <ChevronUp size={14} />
      </button>
    </div>
  );
}

interface NavItem {
  text: string;
  level: 1 | 2 | 3 | 4;
  open?: boolean;
  selected?: boolean;
}

const navItems: NavItem[] = [
  { text: "6.3.1.2 医疗器械经营许可证", level: 4 },
  { text: "6.3.1.3 非医疗器械证明", level: 4 },
  { text: "6.3.1.4 营业执照", level: 4 },
  { text: "6.3.2 半自动体外除颤器（AED）", level: 3, open: true },
  { text: "6.3.2.1 医疗器械生产许可证", level: 4 },
  { text: "6.3.2.2 医疗器械经营许可证", level: 4 },
  { text: "6.3.2.3 医疗器械注册证", level: 4 },
  { text: "6.3.2.4 生产登记表", level: 4 },
  { text: "6.3.2.5 营业执照", level: 4 },
  { text: "6.3.3 病人监护仪", level: 3, open: true },
  { text: "6.3.3.1 医疗器械生产许可证", level: 4 },
  { text: "6.3.3.2 第二类医疗器械经营备案凭证", level: 4 },
  { text: "6.3.3.3 医疗器械注册证", level: 4 },
  { text: "6.3.3.4 医疗器械生产产品登记表", level: 4 },
  { text: "6.3.3.5 营业执照", level: 4 },
  { text: "6.3.4 运动负荷心电分析系统", level: 3, open: true },
  { text: "6.3.4.1 医疗器械生产许可证", level: 4 },
  { text: "6.3.4.2 医疗器械经营许可证", level: 4 },
  { text: "6.3.4.3 第二类医疗器械经营备案凭证", level: 4 },
  { text: "6.3.4.4 医疗器械注册证", level: 4 },
  { text: "6.3.4.5 营业执照", level: 4 },
  { text: "7 代理商授权证明材料", level: 1, open: true },
  { text: "7.1 制造商授权书", level: 2, open: true },
  { text: "7.1.1 激光包埋盒打号机", level: 3, selected: true },
  { text: "7.1.2 半自动体外除颤器（AED）", level: 3 },
  { text: "7.1.3 病人监护仪", level: 3 },
  { text: "7.1.4 运动负荷心电分析系统", level: 3 },
  { text: "8 业绩要求证明材料（如适用）", level: 1 },
  { text: "9 承担本项目的主要人员要求证明材料（如适用）", level: 1, open: true },
  { text: "9.1 拟委任的主要人员汇总表", level: 2 },
  { text: "9.2 主要人员简历表", level: 2 },
  { text: "10 供应商不存在第一章3.2款 情形的证明材料", level: 1, open: true },
  { text: "10.1 不存在禁止情形承诺函", level: 2, open: true },
];

const navIndent = { 1: "pl-[31px]", 2: "pl-[47px]", 3: "pl-[63px]", 4: "pl-[79px]" };

function NavPane() {
  return (
    <aside className="flex w-[350px] shrink-0 flex-col border-r border-[#c2c2c2] text-[12px] text-[#444]">
      <div className="flex h-14 items-center pr-[18px] pl-[14px]">
        <h2 className="flex-1 text-[21px] text-[#333]">导航</h2>
        <ChevronDown size={18} strokeWidth={1.5} />
        <X size={16} strokeWidth={1.5} className="ml-[25px]" />
      </div>
      <label className="mr-[18px] ml-[14px] flex h-[26px] shrink-0 items-center gap-1 border border-[#ababab] bg-white pr-[2px] pl-[6px]">
        <input
          aria-label="在文档中搜索"
          placeholder="在文档中搜索"
          className="min-w-0 flex-1 outline-none placeholder:text-[#666]"
        />
        <Search size={15} strokeWidth={3} className="-scale-x-100 text-[#2b579a]" />
        <Caret />
      </label>
      <div className="flex gap-[25px] pt-[15px] pl-[14px]">
        <button className="h-7 border-b-3 border-[#2b579a] pb-2 font-bold text-[#2b579a]">标题</button>
        <button className="h-7 pb-2">页面</button>
        <button className="h-7 pb-2">结果</button>
      </div>
      <ul className="mt-1 mb-[17px] min-h-0 flex-1 overflow-hidden">
        {navItems.map((item) => (
          <li key={item.text} className={`flex h-[21px] items-center ${navIndent[item.level]}`}>
            <span className="w-4 shrink-0 pl-[6px]">
              {item.open && (
                <Draw w={6} h={6}>
                  <path d="M6 0v6H0z" fill="#444" stroke="none" />
                </Draw>
              )}
            </span>
            <a
              href="#"
              className={`pl-1 leading-[21px] whitespace-nowrap ${item.selected ? "w-[240px] bg-[#c2d5f2]" : ""}`}
            >
              {item.text}
            </a>
          </li>
        ))}
      </ul>
    </aside>
  );
}

function Seal({ text, size, code, className }: { text: string; size: number; code: string; className: string }) {
  const chars = [...text];
  const start = -120;
  const step = 240 / (chars.length - 1);
  return (
    <svg viewBox="0 0 100 100" width={size} height={size} className={`absolute ${className}`} fill="#e0403f">
      <circle cx="50" cy="50" r="48.5" fill="none" stroke="#e0403f" strokeWidth="2" />
      {chars.map((c, i) => (
        <text
          key={i}
          x="50"
          y="17"
          fontSize={chars.length > 14 ? 11 : 12}
          fontWeight="500"
          textAnchor="middle"
          transform={`rotate(${start + i * step} 50 50)`}
        >
          {c}
        </text>
      ))}
      {[...code].map((c, i) => (
        <text key={i} x="50" y="95" fontSize="6" textAnchor="middle" transform={`rotate(${30 - i * 6} 50 50)`}>
          {c}
        </text>
      ))}
      <path d="M50 33l4 12h13l-10.500 8 4 12.500L50 58l-10.500 7.500 4-12.500L33 45h13z" />
    </svg>
  );
}

function Row({ full, indent, children }: { full?: boolean; indent?: boolean; children?: ReactNode }) {
  return (
    <p
      className={`whitespace-nowrap [&>u]:underline-offset-2 ${full ? "[text-align-last:justify]" : ""} ${
        indent ? "pl-[2em]" : ""
      }`}
    >
      {children}
    </p>
  );
}

function PageFooter({ page }: { page: string }) {
  return (
    <div className="flex h-[27px] items-start justify-between px-[60px]">
      <div className="h-5 w-5 border-t border-r border-[#ababab]" />
      <span className="pt-[7px] text-[11px] leading-5 text-[#777]">{page}↵</span>
      <div className="h-5 w-5 border-t border-l border-[#ababab]" />
    </div>
  );
}

function FirstPage() {
  return (
    <article className={`flex w-[676px] shrink-0 flex-col border-x border-[#c2c2c2] bg-white pt-[3px] text-[#111] ${docFont}`}>
      <div className="pl-[73px] text-[17px] leading-[34px] font-bold text-black">
        <h2 className="flex">
          <span className="w-[39px]">.7. 1</span>制造商授权书
          <span className="font-normal text-[#999]">↵</span>
        </h2>
        <h3 className="flex">
          <span className="w-[55px]">.7. 1. 1</span>激光包埋盒打号机
          <span className="font-normal text-[#999]">↵</span>
        </h3>
      </div>
      <div className="mt-10 ml-[146px] w-[388px] text-[9px]">
        <h4 className="pl-6 text-center text-[12px] leading-6 font-bold">制造商授权书</h4>
        <div className="mt-[2px] grid h-[391px] auto-rows-fr items-center">
          <Row indent>
            致：<u>通用技术集团医疗健康控股有限公司/中技国际招标有限公司</u>
          </Row>
          <Row full indent>
            我们<u>（制造商）宁波江丰生物信息技术有限公司</u> 是按<u>　（中国/浙江省）　</u>法律成立的一家
          </Row>
          <Row full>
            <u>制造商　</u>，主要营业地点设在<u>　浙江省余姚市凤山街道邵司路 1 号、邵东路 21 号　</u>。兹指派按
          </Row>
          <Row full>
            <u>（中国/辽宁省盘锦市）</u>的法律正式成立的，主要营业地点设在<u> 辽宁省盘锦市兴隆台区辽河南</u>
          </Row>
          <Row>
            <u>路西　</u>的<u> 国药器械盘锦有限公司 </u>作为我方真正的和合法的代理人进行下列有效的活动：
          </Row>
          <Row full indent>
            (1)代表我方在中华人民共和国办理贵方第<u>　（0701-254702180405）　</u>号采购公告/采购邀请
          </Row>
          <Row full>
            书要求提供的由我方制造/总代理/独家代理/经销的<u>　包号：01-1 、 货物名称：激光包埋盒打</u>
          </Row>
          <Row>
            <u>号机、型号：KP-UE-006 ）</u>的有关事宜，并对我方具有约束力。
          </Row>
          <Row full indent>
            (2)作为<u>（制造商）宁波江丰生物信息技术有限公司　　</u>，我方保证以响应合作者来约束自
          </Row>
          <Row>己，并对该响应共同和分别承担采购文件中所规定的义务。</Row>
          <Row full indent>
            (3)我方兹授予<u>　　国药器械盘锦有限公司　</u>全权办理和履行上述我方为完成上述各点所
          </Row>
          <Row full>
            必须的事宜，具有替换或撤消的全权。兹确认<u> 国药器械盘锦有限公司 </u>或其正式授权代表依此
          </Row>
          <Row>合法地办理一切事宜。</Row>
          <Row />
          <Row full indent>
            我方于<u> 2025 </u>年<u> 09 </u>月<u> 09 </u>日签署本文件，<u>国药器械盘锦有限公司</u>于<u> 2025 </u>年
            <u> 09 </u>月<u> 09 </u>日
          </Row>
          <Row>接受此件，以此为证。</Row>
        </div>
        <div className="relative mt-[15px] ml-[222px] whitespace-nowrap">
          <div className="flex h-[30px] items-center">
            制造商（单位公章）：<u className="underline-offset-2">宁波江丰生物信息技</u>
          </div>
          <div className="flex h-[30px] items-center pl-[86px]">
            <u className="underline-offset-2">术有限公司　</u>
          </div>
          <div className="flex h-7 items-center">
            签字人职务和部门：
            <span className="flex-1 border-b border-black">业务经理、销售部门</span>
          </div>
          <div className="flex h-7 items-center">
            签字人姓名：
            <span className="flex-1 border-b border-black pl-7">李国祥</span>
          </div>
          <div className="flex h-7 items-center">
            签字人签字：
            <span className="h-3 flex-1 border-b border-black" />
          </div>
          <Seal text="宁波江丰生物信息技术有限公司" code="33021800" size={94} className="top-[-33px] left-[55px]" />
          <Draw w={54} h={26} className="absolute top-[112px] left-[72px] text-[#111]">
            <path
              strokeWidth="1"
              d="M2 8l12-3 M8 1L7 14 M8 6L1 13 M9 7l5 3 M5 14h6l-4 4c5 0 4 7 0 6 M21 5l9-2-1 15-7 1z M23 9h6 M26 6v9 M23 15l6-1 M36 3l4 3 M35 9l5-1-5 8 M38 11v9 M44 3l2 3 M51 1l-3 5 M42 8l11-2 M43 12l9-1 M41 17l12-2 M48 6l-1 18"
            />
          </Draw>
          <div className="absolute top-[52px] left-[-54px] h-[111px] w-[217px] border-[3px] border-[#d0111f]" />
        </div>
      </div>
      <div className="mt-auto text-[11px] leading-[22px] text-[#999]">
        <div className="pr-[96px] text-right">↵</div>
        <div className="pl-[242px]">↵</div>
      </div>
      <div className="mt-2">
        <PageFooter page="95" />
      </div>
    </article>
  );
}

function SecondPage() {
  return (
    <article className={`flex w-[677px] shrink-0 flex-col border-x border-[#c2c2c2] bg-white pt-[45px] text-[#111] ${docFont}`}>
      <div className="ml-[139px] w-[420px] text-[11px]">
        <h4 className="pl-[38px] text-[15px] leading-6 font-bold whitespace-nowrap">
          制造商（或境内总代理商或独家代理商或经销商）授权书
        </h4>
        <div className="mt-[5px] grid h-[367px] auto-rows-fr items-center">
          <Row indent>
            致：<u>通用技术集团医疗健康控股有限公司</u>
          </Row>
          <Row full indent>
            我们<u>（制造商：重庆医药集团席勒医疗设备有限公司）</u> 是按<u>（中国/重庆）</u> 法律
          </Row>
          <Row full>
            成立的一家<u>制造商，</u>主要营业地点设在<u>（重庆市大渡口区翠柏路 104 号 1 幢 6-1）</u> 。兹
          </Row>
          <Row full>
            指派按<u>（中国/辽宁省盘锦市)</u> 的法律正式成立的，主要营业地点设在<u> (辽宁省盘锦市</u>
          </Row>
          <Row full>
            <u>兴隆台区辽河南路西 211103005003GB00046F00010001)</u> 的<u>(国药器械盘锦有限公司)</u> 作
          </Row>
          <Row>为我方真正的和合法的代理人进行下列有效的活动：</Row>
          <Row full indent>
            (1)代表我方在中华人民共和国办理贵方第<u> （0701-254702180405） </u>号采购公告/
          </Row>
          <Row full>
            采购邀请书要求提供的由我方制造/总代理/独家代理/经销的<u>包号(01-2)货物名称(半</u>
          </Row>
          <Row>
            <u>自动体外除颤器　型号：Easy AED F3）</u>的有关事宜，并对我方具有约束力。
          </Row>
          <Row full indent>
            (2)作为<u>制造商</u>，我方保证以响应合作者来约束自己，并对该响应共同和分别承担
          </Row>
          <Row>采购文件中所规定的义务。</Row>
          <Row full indent>
            (3)我方兹授予<u>（国药器械盘锦有限公司）</u> 全权办理和履行上述我方为完成上述各
          </Row>
          <Row full>
            点所必须的事宜，具有替换或撤消的全权。兹确认<u>（国药器械盘锦有限公司）</u> 或其正
          </Row>
          <Row>式授权代表依此合法地办理一切事宜。</Row>
          <Row />
          <Row full indent>
            我方于<u>　2025　</u>年<u>　9　</u>月<u>　9　</u>日签署本文件，(国药器械盘锦有限公司) 于<u> 2025</u>
          </Row>
          <Row>
            年<u>　9　 </u>月<u>　9　</u>日接受此件，以此为证。
          </Row>
        </div>
        <div className="relative mt-[22px] ml-[183px] leading-[22px] whitespace-nowrap">
          重庆医药集团席勒医疗设备有限公司(单位公章)：
          <Seal
            text="重庆医药集团席勒医疗设备有限公司"
            code="5002247083"
            size={100}
            className="top-[-35px] left-[94px] opacity-75"
          />
        </div>
        <div className="relative mt-[43px] ml-[223px] w-[182px] whitespace-nowrap">
          <div className="flex h-[22px] items-center">
            签字人职务和部门：
            <span className="flex-1 border-b border-black pl-4 leading-4">销售员</span>
          </div>
          <div className="flex h-[22px] items-center">
            签字人姓名：
            <span className="flex-1 border-b border-black pl-3 leading-4">王强</span>
          </div>
          <div className="flex h-[22px] items-center">
            签字人签字：
            <span className="h-4 flex-1 border-b border-black" />
          </div>
          <Draw w={38} h={18} className="absolute top-[41px] left-[74px] text-black">
            <path
              strokeWidth="1.3"
              d="M3 4l5-1-4 5 3 1-4 4h4 M15 1L9 13 M20 3l5-1-2 4-4 1 4-1-2 8-3-1 M27 2l5-1-1 4-4 1z M26 8l6-1-1 4-6 1z M29 6l-1 9 M24 15l9-2 3 3"
            />
          </Draw>
          <div className="absolute top-[-14px] left-[-1px] h-[93px] w-[202px] border-[3px] border-[#d0111f]" />
        </div>
      </div>
      <div className="mt-auto text-[11px] leading-[22px] text-[#999]">
        <div className="pr-[78px] text-right">↵</div>
        <div className="pl-[242px]">↵</div>
      </div>
      <div className="mt-[65px]">
        <PageFooter page="96" />
      </div>
    </article>
  );
}

function evens(from: number, to: number) {
  const out: number[] = [];
  for (let n = from; n <= to; n += 2) out.push(n);
  return out;
}

function RulerCells({ values }: { values: number[] }) {
  return (
    <>
      {values.map((n) => (
        <span key={n} className="w-6 shrink-0 text-center">
          {n}
        </span>
      ))}
    </>
  );
}

function IndentMark({ d, h, className }: { d: string; h: number; className: string }) {
  return (
    <Draw w={11} h={h} className={`absolute text-[#777] ${className}`}>
      <path d={d} fill="#fff" strokeWidth="1" />
    </Draw>
  );
}

function HorizontalRuler() {
  return (
    <div className="relative ml-20 flex h-[17px] text-[10px] leading-[17px] text-[#555]">
      <div className="flex w-20 shrink-0 justify-end bg-[#c6c6c6] pr-3">
        <RulerCells values={[6, 4, 2]} />
      </div>
      <div className="flex shrink-0 bg-white pl-3">
        <RulerCells values={evens(2, 42)} />
      </div>
      <div className="flex w-[81px] shrink-0 bg-[#c6c6c6]">
        <RulerCells values={evens(44, 48)} />
      </div>
      <IndentMark d="M.5.5h10v5l-5 4-5-4z" h={10} className="-top-[3px] left-[75px]" />
      <IndentMark d="M.5 14.5v-9l5-5 5 5v9z M.5 9.500h10" h={15} className="top-[10px] left-[124px]" />
      <IndentMark d="M.5 9.500v-4l5-5 5 5v4z" h={10} className="top-[10px] left-[591px]" />
    </div>
  );
}

function VerticalRuler() {
  return (
    <div className="flex w-[26px] shrink-0 flex-col items-center pt-[3px]">
      <div className="mb-[6px] flex h-[21px] w-6 items-center justify-center border-2 border-[#d0d0d0] bg-[#fdfdfd]">
        <Draw w={6} h={7}>
          <path d="M1 0v6h5" stroke="#555" />
        </Draw>
      </div>
      <div className="flex h-[771px] w-[17px] flex-col justify-between bg-white text-[10px] leading-[17px] text-[#555]">
        {evens(2, 44).map((n) => (
          <div key={n} className="flex h-5 items-center justify-center">
            <span className="rotate-180 [writing-mode:vertical-rl]">|{n}|</span>
          </div>
        ))}
      </div>
      <div className="flex w-[17px] flex-1 items-center justify-center bg-[#c6c6c6] text-[10px] leading-[17px] text-[#555]">
        <span className="rotate-180 [writing-mode:vertical-rl]">46|</span>
      </div>
    </div>
  );
}

function Toast() {
  return (
    <div className="absolute right-[22px] bottom-[26px] h-14 w-[199px] rounded bg-[#343541] px-3 pt-2 shadow-lg">
      <div className="flex items-center text-[10px] leading-3 text-[#c3c3c8]">
        <span className="flex-1">腾讯电脑管家-推荐</span>
        <Settings size={9} />
        <X size={9} className="ml-[9px]" />
      </div>
      <div className="mt-[6px] flex items-center text-[12px] leading-5 whitespace-nowrap">
        <Draw w={21} h={20}>
          <circle cx="10.5" cy="10" r="9" fill="#6cc4ff" stroke="#1d83ff" />
          <path d="M7.5 7.5v3 M12.5 7.5v3" stroke="#fff" />
        </Draw>
        <b className="pl-[6px] text-[#2f9bff]">问元宝</b>
        <span className="pl-2 text-white">教你Excel高手秘籍</span>
      </div>
    </div>
  );
}

function StatusBar() {
  return (
    <footer className="flex h-[13px] shrink-0 items-start overflow-hidden border-t border-[#c6c6c6] bg-[#f3f3f3] pr-2 pl-3 text-[12px] leading-[18px] whitespace-nowrap text-[#444]">
      <span className="w-[130px]">第 95 页，共 179 页</span>
      <span className="w-[75px]">6314 个字</span>
      <span className="w-8 pt-[3px]">
        <BookOpen size={14} />
      </span>
      <span className="w-[122px]">简体中文(中国大陆)</span>
      <span className="w-[73px]">修订: 关闭</span>
      <span className="w-5 pt-[3px]">
        <Settings size={14} />
      </span>
      <b className="font-medium">辅助功能: 调查</b>
      <div className="ml-auto flex items-start">
        <span className="px-3 pt-[3px]">
          <BookOpen size={14} />
        </span>
        <span className="bg-[#c6c6c6] px-3 pt-[3px]">
          <FileText size={14} />
        </span>
        <span className="pt-[3px] pr-4 pl-3">
          <FileText size={14} />
        </span>
        <span className="px-2">−</span>
        <input type="range" aria-label="缩放" defaultValue={42} className="mt-[2px] h-4 w-[100px] accent-[#444]" />
        <span className="px-2">+</span>
        <span className="pl-2">85%</span>
      </div>
    </footer>
  );
}

function WordWindow() {
  return (
    <section className={`relative flex min-h-0 min-w-0 flex-col overflow-hidden border-l border-[#1e4e79] bg-[#e6e6e6] ${uiFont}`}>
      <header className="flex h-8 shrink-0 items-center bg-[#2b579a] pr-[9px] pl-[21px] text-[12px] text-white">
        <div className="flex w-[218px] items-center">
          <Save size={17} />
          <Undo2 size={16} strokeWidth={3} className="ml-3" />
          <ChevronDown size={9} className="ml-1 text-[#a9bad6]" />
          <RotateCw size={15} className="ml-3 text-[#5b80b8]" />
          <Draw w={7} h={9} className="ml-4">
            <path d="M0 1h7" strokeWidth="1.5" />
            <path d="M0 4h7L3.500 8z" fill="currentColor" stroke="none" />
          </Draw>
        </div>
        <h1 className="flex-1 text-center whitespace-pre text-[#a9bad6]">
          国药器械-医疗设备采购06批-投标文件  -  Word
        </h1>
        <div className="flex w-[222px] items-center justify-between pb-1 text-[#a9bad6]">
          <button className="mt-1 h-5 w-[46px] bg-[#a2b6d5] leading-5 text-[#2b579a]">登录</button>
          <Draw w={14} h={12}>
            <path d="M.5.5h13v11H.5z M.5 3h13 M7 10V5 M5 7l2-2 2 2" strokeWidth="1" />
          </Draw>
          <Minus size={14} strokeWidth={1} />
          <Draw w={11} h={12}>
            <path d="M.5 3.500h7v8h-7z M3 3V.5h7v8H8" strokeWidth="1" />
          </Draw>
          <X size={15} strokeWidth={1.5} />
        </div>
      </header>
      <nav className="flex h-[30px] shrink-0 items-stretch bg-[#2b579a] pr-1 pl-[3px] text-[12px] text-white">
        <button className="w-[58px]">文件</button>
        <button className="w-[50px] bg-[#f3f3f3] text-[#2b579a]">开始</button>
        {ribbonTabs.map((tab) => (
          <button key={tab} className="pr-[13px] pl-[14px]">
            {tab}
          </button>
        ))}
        <button className="flex items-center gap-[9px] pl-4">
          <Lightbulb size={17} />
          操作说明搜索
        </button>
        <button className="my-[3px] ml-auto flex w-[65px] items-center justify-center gap-1 border border-white text-[13px] font-bold">
          <Share size={12} />
          共享
          <ChevronDown size={8} strokeWidth={4} />
        </button>
      </nav>
      <Ribbon />
      <div className="flex h-[30px] shrink-0 items-center border-y border-[#b08400] bg-[#fbf6b4] pr-[3px] pl-[9px] text-[12px] text-[#444]">
        <span className="h-[22px] w-[22px] rounded-full bg-[#4a7ebb] text-center font-['Liberation_Serif'] text-[17px] leading-[22px] font-bold text-white">
          i
        </span>
        <b className="pl-[9px]">获取正版 OFFICE</b>
        <span className="pl-[10px]">
          你的许可证并非正版，你可能是盗版软件的受害者。立即通过正版 Office 避免中断并使文件保持安全。
        </span>
        <button className="ml-[14px] h-6 w-[121px] border border-[#ababab] bg-white">获取正版 Office</button>
        <button className="ml-[9px] h-6 w-[107px] border border-[#ababab] bg-white">了解详细信息</button>
        <button aria-label="关闭" className="ml-auto">
          <X size={13} />
        </button>
      </div>
      <div className="flex min-h-0 flex-1">
        <NavPane />
        <VerticalRuler />
        <div className="flex min-w-0 flex-1 flex-col overflow-hidden">
          <div className="h-[30px] shrink-0 pt-[5px]">
            <HorizontalRuler />
          </div>
          <div className="flex min-h-0 flex-1 gap-[15px] pl-[81px]">
            <FirstPage />
            <SecondPage />
          </div>
        </div>
      </div>
      <StatusBar />
      <Toast />
    </section>
  );
}

export default function App() {
  return (
    <main className="grid h-screen grid-cols-[1427fr_8fr_483fr_1913fr] grid-rows-1 overflow-hidden [text-spacing-trim:space-all]">
      <AcrobatWindow />
      <div className="bg-linear-[180deg,#6f7577_0%,#8f8f86_10%,#1f5a94_15%,#9aa1a0_22%,#6c7f86_32%,#23343c_36%,#b5842f_40%,#c98a26_50%,#5a3a17_60%,#1a1512_66%,#5f7f8c_71%,#54402b_77%,#7a5223_84%,#2b2320_100%]" />
      <NotepadWindow />
      <WordWindow />
    </main>
  );
}
